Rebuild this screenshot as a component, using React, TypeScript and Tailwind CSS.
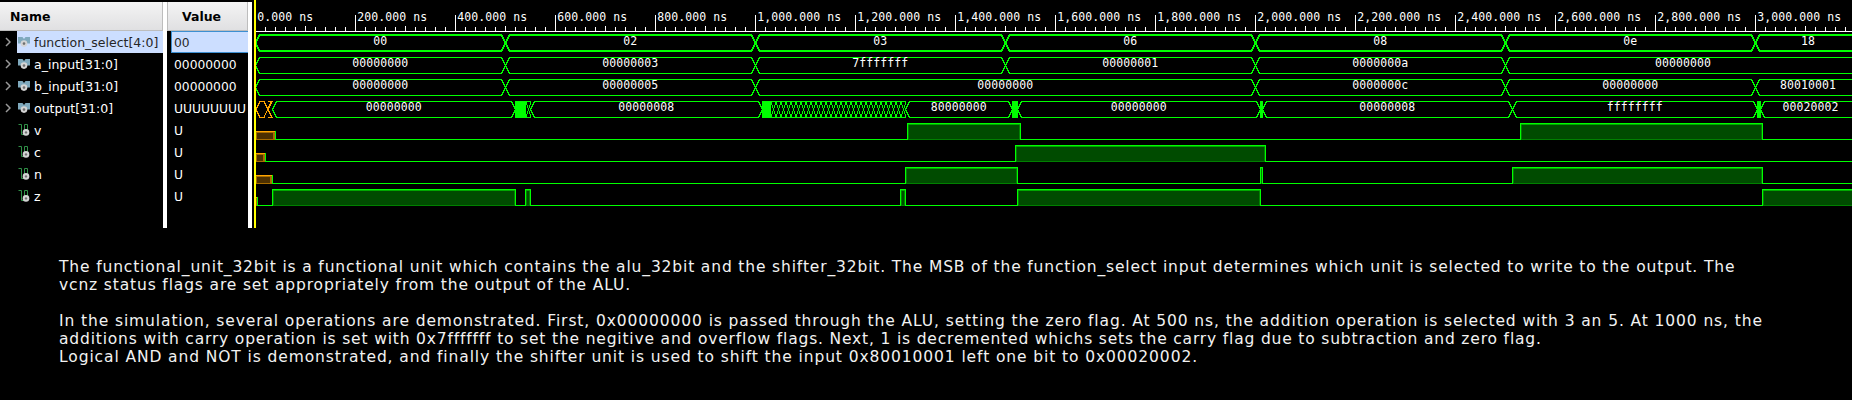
import React from "react";

const G = "#00ff00";
const O = "#ffa500";
const X0 = 252;

type Seg = { from: number; to: number; label?: string; open?: boolean };

function Bus({ segs, top, thick }: { segs: Seg[]; top: number; thick?: boolean }) {
  const t = thick ? top : top + 0.5;
  return (
    <g>
      {segs.map((s) => {
        const to = s.open ? 1861 : s.to;
        const mid = t + 8;
        const d = `M${to - 4} ${t} H${s.from + 4} L${s.from} ${mid} L${s.from + 4} ${t + 16} H${to - 4} L${to} ${mid} Z`;
        return (
          <g key={s.from}>
            <path d={d} fill="none" stroke={G} strokeWidth={thick ? 2 : 1} shapeRendering="crispEdges" />
            <text x={(s.from + to) / 2 - 0.2} y={top + 10} textAnchor="middle" fill="#fff" className="font-['DejaVu_Sans_Mono',monospace] text-[11.5px] tracking-[0.08px]">
              {s.label}
            </text>
          </g>
        );
      })}
    </g>
  );
}

function Wave({ low, start, highs }: { low: number; start: number; highs: [number, number][] }) {
  return (
    <g shapeRendering="crispEdges">
      <rect x={start} y={low} width={1860 - start} height={1} fill={G} />
      <rect x={255} y={low - 8} width={start - 255 + 1} height={9} fill={O} />
      <rect x={255} y={low - 7} width={start - 255} height={8} fill="#a86c00" />
      <rect x={257} y={low - 6} width={Math.max(0, start - 259)} height={6} fill="#4d3000" />
      <rect x={start} y={low - 8} width={1} height={9} fill={G} />
      {highs.map(([a, b]) => (
        <g key={a}>
          <rect x={a} y={low - 16} width={b - a + 1} height={17} fill={G} />
          <rect x={a + 1} y={low - 15} width={b - a - 1} height={16} fill="#008000" />
          <rect x={a + 1} y={low - 15} width={b - a - 1} height={1} fill="#00a800" />
          <rect x={a + 2} y={low - 14} width={Math.max(0, b - a - 3)} height={14} fill="#004b00" />
        </g>
      ))}
    </g>
  );
}

const majors = Array.from({ length: 16 }, (_, i) => i * 200);
const minors = Array.from({ length: 160 }, (_, i) => 265 + i * 10);
const names = ["function_select[4:0]", "a_input[31:0]", "b_input[31:0]", "output[31:0]", "v", "c", "n", "z"];
const values = ["00", "00000000", "00000000", "UUUUUUUU", "U", "U", "U", "U"];

const fs: Seg[] = ["00", "02", "03", "06", "08", "0e", "18"].map((label, i) => ({ from: 255.5 + i * 250, to: 505.5 + i * 250, label, open: i === 6 }));
const aIn: Seg[] = ["00000000", "00000003", "7fffffff", "00000001", "0000000a", "00000000"].map((label, i) => ({ from: 255.5 + i * 250, to: 505.5 + i * 250, label, open: i === 5 }));
const bIn: Seg[] = [
  { from: 255.5, to: 505.5, label: "00000000" },
  { from: 505.5, to: 755.5, label: "00000005" },
  { from: 755.5, to: 1255.5, label: "00000000" },
  { from: 1255.5, to: 1505.5, label: "0000000c" },
  { from: 1505.5, to: 1755.5, label: "00000000" },
  { from: 1755.5, to: 1860, label: "80010001", open: true },
];
const out: Seg[] = [
  { from: 272.5, to: 515.5, label: "00000000" },
  { from: 530.5, to: 762.5, label: "00000008" },
  { from: 905.5, to: 1012.5, label: "80000000" },
  { from: 1017.5, to: 1260.5, label: "00000000" },
  { from: 1262.5, to: 1512.5, label: "00000008" },
  { from: 1512.5, to: 1757.5, label: "ffffffff" },
  { from: 1760.5, to: 1860, label: "00020002", open: true },
];

function BusIcon() {
  return (
    <svg width="12" height="12" viewBox="0 0 12 12" className="shrink-0">
      <path d="M0 1H4.5L6 3L7.5 1H12V7.5H0Z" fill="#7fa9bd" />
      <circle cx="6" cy="7.6" r="3.3" fill="#d4d4d4" />
      <circle cx="6" cy="7.6" r="1.3" fill="#707070" />
    </svg>
  );
}

function BitIcon() {
  return (
    <svg width="12" height="12" viewBox="0 0 12 12" className="shrink-0">
      <path d="M0.5 0.5H3.5V10.5H6M6.5 7V0.5H9.5V7" fill="none" stroke="#2f8f46" />
      <circle cx="8" cy="8.4" r="3.3" fill="#d4d4d4" />
      <circle cx="8" cy="8.4" r="1.2" fill="#707070" />
    </svg>
  );
}

export default function App() {
  return (
    <div className="h-[400px] w-[1852px] overflow-hidden bg-black font-['DejaVu_Sans',sans-serif] text-white">
      <div className="flex h-[228px] text-[12.5px]">
        <div className="w-[163px] pt-[2px]">
          <div className="flex h-[29px] items-center border-r border-b border-[#bdbdbd] bg-linear-to-b from-[#f4f4f4] to-[#e0e0e2] pt-[2px] pl-[10px] font-bold text-black">Name</div>
          {names.map((n, i) => (
            <div key={n} className="flex h-[22px] items-center">
              <div className="flex w-[17px] pl-[5px]">
                {i < 4 && (
                  <svg width="6" height="10" viewBox="0 0 6 10"><path d="M1 1L5 5L1 9" fill="none" stroke="#999" strokeWidth="1.5" /></svg>
                )}
              </div>
              <div className={i === 0 ? "flex h-full flex-1 items-center gap-[4px] bg-[#ccdeff] pl-px text-[#262626]" : "flex h-full flex-1 items-center gap-[4px] pl-px"}>
                {i < 4 ? <BusIcon /> : <BitIcon />}
                <span className="whitespace-nowrap pt-[2px]">{n}</span>
              </div>
            </div>
          ))}
        </div>
        <div className="mt-[2px] w-[4px] bg-white" />
        <div className="w-[81px] pt-[2px]">
          <div className="flex h-[29px] items-center border-r border-b border-l border-[#bdbdbd] bg-linear-to-b from-[#f4f4f4] to-[#e0e0e2] pt-[2px] pl-[14px] font-bold text-black">Value</div>
          {values.map((v, i) => (
            <div key={i} className="flex h-[22px] pl-[4px] text-[12.3px]">
              <div className={i === 0 ? "flex flex-1 items-center border-y border-l border-[#3d8fd1] bg-[#ccdeff] pt-[2px] pl-[2px] text-[#262626]" : "flex flex-1 items-center pt-[2px] pl-[3px]"}>{v}</div>
            </div>
          ))}
        </div>
        <div className="mt-[2px] w-[4px] bg-white" />
        <svg width="1600" height="228" viewBox={`${X0} 0 1600 228`}>
          <g fill="#fff" shapeRendering="crispEdges">
            <rect x="256" y="31" width="1600" height="1" />
            {minors.map((x) => <rect key={x} x={x} y={(x - 255) % 50 === 0 ? 26 : 27} width="1" height="5" />)}
            {majors.slice(1).map((t) => <rect key={t} x={255 + t / 2} y="15" width="1" height="16" />)}
          </g>
          {majors.map((t) => (
            <text key={t} x={257.3 + t / 2} y="21" fill="#fff" className="font-['DejaVu_Sans_Mono',monospace] text-[11.5px] tracking-[0.08px]">{`${t.toLocaleString("en-US")}.000 ns`}</text>
          ))}
          <Bus segs={fs} top={35} thick />
          <Bus segs={aIn} top={57} />
          <Bus segs={bIn} top={79} />
          <Bus segs={out} top={101} />
          <g fill={G} shapeRendering="crispEdges">
            <rect x="515" y="101" width="11" height="17" />
            <rect x="762" y="101" width="9" height="17" />
            <rect x="1012" y="101" width="6" height="17" />
            <rect x="1260" y="101" width="3" height="17" />
            <rect x="1757" y="101" width="4" height="17" />
          </g>
          <g fill="none" shapeRendering="crispEdges">
            <path d="M260 101.5H264L272 117.5M260 117.5H264L271 101.5M256 109.5L260 101.5M256 109.5L260 117.5M268 101.5H272L268 109.5L272 117.5H268" stroke={O} />
            {Array.from({ length: 27 }, (_, i) => 771 + i * 5).map((x) => (
              <path key={x} d={`M${x} 101.5h4M${x} 117.5h4M${x} 101.5L${x + 5} 117.5M${x + 5} 101.5L${x} 117.5`} stroke={G} />
            ))}
            <path d="M526 101.5h4M526 117.5h4M526 101.5L531 117.5M531 101.5L526 117.5" stroke={G} />
          </g>
          <Wave low={139} start={275} highs={[[907, 1020], [1520, 1762]]} />
          <Wave low={161} start={265} highs={[[1015, 1265]]} />
          <Wave low={183} start={272} highs={[[905, 1017], [1260, 1262], [1512, 1762]]} />
          <Wave low={205} start={257} highs={[[272, 515], [525, 530], [900, 905], [1017, 1260], [1762, 1861]]} />
          <rect x="254" y="0" width="2" height="228" fill="#ffff00" />
        </svg>
      </div>
      <div className="pt-[30px] pl-[59px] text-[15.5px] leading-[18px] tracking-[0.85px] whitespace-nowrap text-[#f2f2f2]">
        <p>The functional_unit_32bit is a functional unit which contains the alu_32bit and the shifter_32bit. The MSB of the function_select input determines which unit is selected to write to the output. The</p>
        <p>vcnz status flags are set appropriately from the output of the ALU.</p>
        <p className="pt-[18px] tracking-[0.892px]">In the simulation, several operations are demonstrated. First, 0x00000000 is passed through the ALU, setting the zero flag. At 500 ns, the addition operation is selected with 3 an 5. At 1000 ns, the</p>
        <p className="tracking-[0.823px]">additions with carry operation is set with 0x7fffffff to set the negitive and overflow flags. Next, 1 is decremented whichs sets the carry flag due to subtraction and zero flag.</p>
        <p className="tracking-[0.899px]">Logical AND and NOT is demonstrated, and finally the shifter unit is used to shift the input 0x80010001 left one bit to 0x00020002.</p>
      </div>
    </div>
  );
}
